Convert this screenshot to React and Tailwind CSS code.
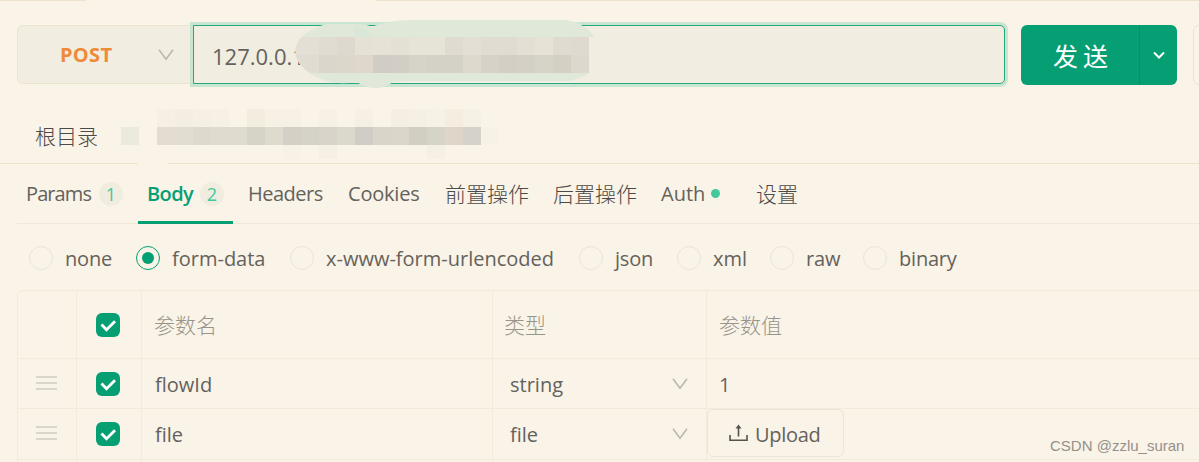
import React from "react";

const urlTop = ["#e3dfd4", "#e1dcd2", "#dfd8ce", "#e5e1d5", "#e6e2d6", "#e4e0d4", "#e6e3d7", "#e6e3d7", "#dfdbd1", "#e3dfd4", "#e1dcd2", "#e1dcd2", "#e3dfd4", "#e6e2d6", "#e0dbd0", "#dfd9cf"];
const urlBottom = ["#e1dcd2", "#dbd6cc", "#dcd6cb", "#dfd7cb", "#d1cdc4", "#d2cec5", "#d6d3c8", "#d4d1c7", "#d4d1c6", "#ddd9cd", "#d6d2c7", "#d3cfc5", "#d4d0c6", "#d6d3c9", "#d5d0c4", "#ddd7cd"];
const pathTop = ["#f6efe4", "#f4ede1", "#f6f0e4", "#f7f0e5", "#faf3e7", "#f3ede0", "#f7f1e5", "#f7f1e5", "#faf3e7", "#f7f0e5", "#faf3e7", "#f6efe4", "#faf3e7", "#f5eee2", "#f6efe4", "#f7f2e6", "#f4ede0", "#f5f1e4"];
const pathMid = ["#e3dcd1", "#e1ddd1", "#dddacd", "#dfdccf", "#dfdccf", "#d6d3c8", "#dedace", "#d4d0c8", "#d5d2c8", "#d8d4c9", "#dbd8cc", "#d1ccc5", "#d9d6c9", "#dad6cb", "#d2cec2", "#d6d4c8", "#dfd6c9", "#d4d2ca"];

function UrlMosaic() {
  return (
    <svg className="absolute left-[101px] top-[-6px]" width="306" height="72">
      <defs>
        <clipPath id="blob">
          <path d="M32 4H60Q72 4 77 7Q92 0 120 0H270Q288 2 300 17H294V53Q282 61 270 61H110L98 62Q90 68 81 68Q70 68 62 62Q45 65 32 61C-10 47-10 15 32 4Z" />
        </clipPath>
      </defs>
      <g clipPath="url(#blob)">
        <rect width="306" height="72" fill="#dfe8d9" />
        <path d="M60 17V5Q70 8 78 17Z" fill="#d8e7d7" />
        {urlTop.map((c, i) => <rect key={i} x={i === 0 ? 0 : 6 + i * 18} y="17" width={i === 0 ? 24 : 18} height="18" fill={c} shapeRendering="crispEdges" />)}
        {urlBottom.map((c, i) => <rect key={i} x={i === 0 ? 0 : 6 + i * 18} y="35" width={i === 0 ? 24 : 18} height="18" fill={c} shapeRendering="crispEdges" />)}
      </g>
    </svg>
  );
}

function PathMosaic() {
  return (
    <svg className="ml-[23px] shrink-0" width="380" height="52" shapeRendering="crispEdges">
      <rect x="0" y="18" width="18" height="18" fill="#ece9dd" />
      {pathTop.map((c, i) => <rect key={i} x={36 + i * 18} width="18" height="18" fill={c} />)}
      {pathMid.map((c, i) => <rect key={i} x={36 + i * 18} y="18" width="18" height="18" fill={c} />)}
      <rect x="360" y="18" width="18" height="18" fill="#f7f2e5" />
      <rect x="162" y="36" width="18" height="14" fill="#f8f1e5" />
      <rect x="198" y="36" width="18" height="14" fill="#f6efe3" />
      <rect x="306" y="36" width="18" height="14" fill="#f6efe3" />
    </svg>
  );
}

function Chevron() {
  return (
    <svg className="shrink-0" width="16" height="12" viewBox="0 0 16 12" fill="none" stroke="#bab6ab" strokeWidth="1.5">
      <path d="M1 .7L8 10.3L15 .7" />
    </svg>
  );
}

function Checked() {
  return (
    <span className="flex size-6 items-center justify-center rounded-[6px] bg-[#069f73]">
      <svg width="24" height="24" fill="none" stroke="#fff" strokeWidth="2.8"><path d="M5.5 11.5L10.5 16.8L19 8.3" /></svg>
    </span>
  );
}

function Handle() {
  return (
    <span className="flex w-[21px] flex-col gap-1 pb-[2px]">
      <i className="h-[2px] bg-[#dad6ca]" /><i className="h-[2px] bg-[#dad6ca]" /><i className="h-[2px] bg-[#dad6ca]" />
    </span>
  );
}

function Radio({ label, box, text = "", on }) {
  return (
    <label className={`flex shrink-0 items-center ${box}`}>
      <span className={`mr-3 flex size-6 shrink-0 items-center justify-center rounded-full border ${on ? "border-[#069f73]" : "border-[#e9e5d8]"}`}>
        {on && <i className="size-3 rounded-full bg-[#069f73]" />}
      </span>
      <span className={`pt-[2px] ${text}`}>{label}</span>
    </label>
  );
}

function Count({ children }) {
  return <span className="flex size-6 items-center justify-center rounded-full bg-[#f1ece0] pt-px text-[18px] text-[#41c89d]">{children}</span>;
}

const grid = "grid grid-cols-[59px_65px_351px_214px_1fr]";
const cell = "flex items-center border-r border-[#f3ead9]";

function Row({ name, type, children }) {
  return (
    <div className={`${grid} border-b border-[#f3ead9]`}>
      <div className={`${cell} justify-center pr-[2px]`}><Handle /></div>
      <div className={`${cell} justify-center pr-[3px]`}><Checked /></div>
      <div className={`${cell} pl-[13px] pt-[2px]`}>{name}</div>
      <div className={`${cell} justify-between pl-[17px] pr-[18px]`}><span className="pt-[2px]">{type}</span><Chevron /></div>
      <div className="flex items-center">{children}</div>
    </div>
  );
}

export default function App() {
  return (
    <main className="relative flex h-[462px] w-[1199px] flex-col overflow-hidden whitespace-nowrap bg-[#faf3e7] font-['Open_Sans','Noto_Sans_CJK_SC',sans-serif] text-[20px] font-normal leading-[28px] text-[#64625c]">
      <div className="flex h-[25px] shrink-0 justify-between">
        <i className="h-px w-[86px] bg-[#eee2c8]" /><i className="h-px w-[823px] bg-[#eee2c8]" />
      </div>
      <div className="flex h-[60px] shrink-0 pl-[17px]">
        <div className="flex h-[59px] w-[176px] shrink-0 items-center rounded-l-[6px] border border-r-0 border-[#ece3cf] bg-[#f1ede0] pl-[42px]">
          <b className="w-[98px] text-[20px] font-bold tracking-[0.3px] text-[#ee8b3a]">POST</b>
          <Chevron />
        </div>
        <div className="relative flex h-[59px] w-[812px] shrink-0 items-center rounded-r-[5px] border border-[#27a77f] bg-[#f1ede0] pl-[18px] text-[22px] shadow-[0_0_0_3px_#c8e5d1]">
          <span className="pt-[2px]">127.0.0.1</span>
          <UrlMosaic />
        </div>
        <div className="ml-4 flex h-[60px] w-[156px] shrink-0 rounded-[6px] bg-[#069f73] text-white">
          <div className="flex w-[119px] items-center border-r border-[#078f69] pl-8 pt-[2px] text-[25px] font-normal tracking-[5px]">发送</div>
          <div className="flex flex-1 items-center justify-center">
            <svg width="14" height="10" fill="none" stroke="#fff" strokeWidth="2"><path d="M2 2.5L7 7.5L12 2.5" /></svg>
          </div>
        </div>
        <div className="ml-4 h-[60px] w-10 shrink-0 rounded-[6px] border border-[#ece3d3]" />
      </div>
      <div className="flex h-[78px] shrink-0 items-start pl-[35px] pt-6">
        <span className="w-[63px] pt-[13px] text-[21px] font-light text-[#4c4a46]">根目录</span>
        <PathMosaic />
      </div>
      <div className="flex h-px shrink-0 justify-between">
        <i className="w-[138px] bg-[#eee2c8]" /><i className="w-[1031px] bg-[#eee2c8]" />
      </div>
      <nav className="ml-[17px] flex h-[60px] shrink-0 items-center border-b border-[#f0e8d8] pl-[9px] leading-[58px]">
        <span className="flex w-[112px] items-center"><span className="w-[73px] tracking-[-0.9px]">Params</span><Count>1</Count></span>
        <span className="flex h-[60px] w-[95px] items-center border-b-[3px] border-[#069f73] pl-[9px] pt-[3px] font-semibold text-[#069f73]">
          <span className="w-[53px] tracking-[-0.6px]">Body</span><span className="font-normal"><Count>2</Count></span>
        </span>
        <span className="ml-[15px] w-[100px] tracking-[-0.5px]">Headers</span>
        <span className="w-[97px] tracking-[-0.2px]">Cookies</span>
        <span className="w-[108px] text-[21px] font-light text-[#4c4a46]">前置操作</span>
        <span className="w-[108px] text-[21px] font-light text-[#4c4a46]">后置操作</span>
        <span className="flex w-[95px] items-center"><span className="w-[50px]">Auth</span><i className="size-[9px] rounded-full bg-[#41c89d]" /></span>
        <span className="text-[21px] font-light text-[#4c4a46]">设置</span>
      </nav>
      <div className="flex h-[66px] shrink-0 items-center pl-[29px] pt-[2px]">
        <Radio label="none" box="w-[107px]" text="tracking-[-0.2px]" />
        <Radio label="form-data" box="w-[154px]" on />
        <Radio label="x-www-form-urlencoded" box="w-[289px]" />
        <Radio label="json" box="w-[98px]" text="tracking-[-0.2px]" />
        <Radio label="xml" box="w-[93px]" />
        <Radio label="raw" box="w-[93px]" text="tracking-[-0.2px]" />
        <Radio label="binary" box="w-[120px]" text="tracking-[-0.2px]" />
      </div>
      <section className="ml-[17px] grid w-[1200px] shrink-0 grid-rows-[68px_50px_51px_20px] rounded-tl-[6px] border border-[#f3ead9]">
        <div className={`${grid} border-b border-[#f3ead9] text-[21px] font-light text-[#98948a]`}>
          <div className={cell} />
          <div className={`${cell} justify-center pr-[3px]`}><Checked /></div>
          <div className={`${cell} pl-3`}>参数名</div>
          <div className={`${cell} pl-[11px]`}>类型</div>
          <div className="flex items-center pl-[12px]">参数值</div>
        </div>
        <Row name="flowId" type="string"><span className="pl-3 pt-[2px]">1</span></Row>
        <Row name="file" type="file">
          <button className="mb-[2px] flex h-[48px] w-[137px] items-center rounded-[6px] border border-[#e9e6d9] pl-[21px]">
            <svg className="mr-[7px]" width="19" height="18" fill="none" stroke="#55534e" strokeWidth="1.6"><path d="M1 11V16.2H18V11M9.5 12.5V3" /><path d="M6.5 4.5L9.5 .5L12.5 4.5Z" fill="#55534e" stroke="none" /></svg>
            <span className="pt-[3px] tracking-[-0.3px]">Upload</span>
          </button>
        </Row>
        <div className={grid}><i className={cell} /><i className={cell} /><i className={cell} /><i className={cell} /></div>
      </section>
      <span className="absolute left-[1050px] top-[436px] font-['Liberation_Sans',sans-serif] text-[15px] font-normal leading-[20px] text-[#94918a]">CSDN @zzlu_suran</span>
    </main>
  );
}
